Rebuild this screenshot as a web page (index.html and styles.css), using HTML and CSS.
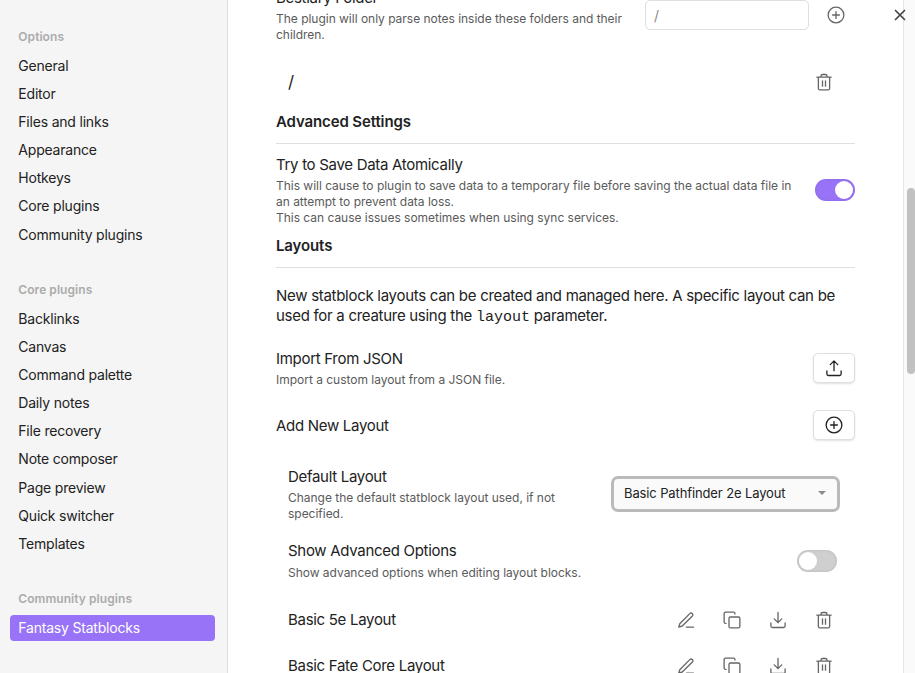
FILE: index.html
```html
<!DOCTYPE html>
<html lang="en">
<head>
<meta charset="utf-8">
<title>Settings</title>
<link rel="stylesheet" href="styles.css">
</head>
<body>
<svg class="defs" width="0" height="0">
  <defs>
    <symbol id="plus-circle" viewBox="0 0 24 24"><circle cx="12" cy="12" r="10.5"/><path d="M12 7.5v9M7.5 12h9"/></symbol>
    <symbol id="trash" viewBox="0 0 24 24"><path d="M2.500 5.500h19M4.500 5.500v15a2 2 0 0 0 2 2h11a2 2 0 0 0 2-2v-15M8 5.500V4a2 2 0 0 1 2-2h4a2 2 0 0 1 2 2v1.500M10 10.500v7M14 10.500v7"/></symbol>
    <symbol id="upload" viewBox="0 0 24 24"><path d="M2.500 16v4a2 2 0 0 0 2 2h15a2 2 0 0 0 2-2v-4M12 15.500V2.500M7 7.500l5-5 5 5"/></symbol>
    <symbol id="download" viewBox="0 0 24 24"><path d="M2.500 16v4a2 2 0 0 0 2 2h15a2 2 0 0 0 2-2v-4M12 2v13.500M7 10.500l5 5 5-5"/></symbol>
    <symbol id="copy" viewBox="0 0 24 24"><rect x="8" y="8" width="14.500" height="14.500" rx="2"/><path d="M4 16.500H3.500a2 2 0 0 1-2-2V3.500a2 2 0 0 1 2-2H14a2 2 0 0 1 2 2v.5"/></symbol>
    <symbol id="edit" viewBox="0 0 24 24"><path d="M12.500 21.500H22M17 3.500a2.300 2.300 0 0 1 3.500 3.200L7 20l-4.700 1.500L3.700 17z"/></symbol>
  </defs>
</svg>
<div class="modal">
  <nav class="sidebar">
    <section class="group">
      <h2>Options</h2>
      <a>General</a><a>Editor</a><a>Files and links</a><a>Appearance</a><a>Hotkeys</a><a>Core plugins</a><a>Community plugins</a>
    </section>
    <section class="group">
      <h2>Core plugins</h2>
      <a>Backlinks</a><a>Canvas</a><a>Command palette</a><a>Daily notes</a><a>File recovery</a><a>Note composer</a><a>Page preview</a><a>Quick switcher</a><a>Templates</a>
    </section>
    <section class="group">
      <h2>Community plugins</h2>
      <a class="active">Fantasy Statblocks</a>
    </section>
  </nav>
  <main class="content">
    <div class="row folder">
      <div class="info"><div class="name">Bestiary Folder</div><div class="desc">The plugin will only parse notes inside these folders and their<br>children.</div></div>
      <div class="folder-controls"><div class="input">/</div><svg class="icon"><use href="#plus-circle"/></svg></div>
    </div>
    <div class="row path"><div class="name">/</div><svg class="icon"><use href="#trash"/></svg></div>
    <h3>Advanced Settings</h3>
    <div class="row atomic">
      <div class="info"><div class="name">Try to Save Data Atomically</div><div class="desc">This will cause to plugin to save data to a temporary file before saving the actual data file in<br>an attempt to prevent data loss.<br>This can cause issues sometimes when using sync services.</div></div>
      <div class="toggle on"></div>
    </div>
    <h3>Layouts</h3>
    <p>New statblock layouts can be created and managed here. A specific layout can be<br>used for a creature using the <code>layout</code> parameter.</p>
    <div class="row import">
      <div class="info"><div class="name">Import From JSON</div><div class="desc">Import a custom layout from a JSON file.</div></div>
      <button><svg class="icon"><use href="#upload"/></svg></button>
    </div>
    <div class="row add"><div class="name">Add New Layout</div><button><svg class="icon"><use href="#plus-circle"/></svg></button></div>
    <div class="nested">
      <div class="row default">
        <div class="info"><div class="name">Default Layout</div><div class="desc">Change the default statblock layout used, if not<br>specified.</div></div>
        <div class="select"><span>Basic Pathfinder 2e Layout</span><i></i></div>
      </div>
      <div class="row advanced">
        <div class="info"><div class="name">Show Advanced Options</div><div class="desc">Show advanced options when editing layout blocks.</div></div>
        <div class="toggle"></div>
      </div>
      <div class="row layout"><div class="name">Basic 5e Layout</div><div class="actions"><svg class="icon"><use href="#edit"/></svg><svg class="icon"><use href="#copy"/></svg><svg class="icon"><use href="#download"/></svg><svg class="icon"><use href="#trash"/></svg></div></div>
      <div class="row layout"><div class="name">Basic Fate Core Layout</div><div class="actions"><svg class="icon"><use href="#edit"/></svg><svg class="icon"><use href="#copy"/></svg><svg class="icon"><use href="#download"/></svg><svg class="icon"><use href="#trash"/></svg></div></div>
    </div>
  </main>
  <div class="scrollbar"><div class="thumb"></div></div>
  <svg class="close" viewBox="0 0 12 12"><path d="M1.500 1.500l9 9M10.500 1.500l-9 9"/></svg>
</div>
</body>
</html>
```
FILE: styles.css
```css
* { box-sizing: border-box; }
body { margin: 0; background: #fff; color: #222; font-family: Inter, sans-serif; font-size: 15px; }
.defs { position: absolute; }
.modal { position: relative; display: flex; width: 915px; height: 673px; overflow: hidden; background: #fff; }
.sidebar { width: 228px; flex: none; padding: 21px 12px 0 10px; background: #f5f5f5; border-right: 1px solid #dfdfdf; }
.group { margin-bottom: 26.4px; }
h2 { margin: 0; padding-left: 8.3px; font-size: 12px; font-weight: 600; line-height: 32px; letter-spacing: 0.06px; color: #ababab; }
.group a { display: block; height: 26px; margin-bottom: 2.1px; padding-left: 8.3px; border-radius: 4px; font-size: 14px; line-height: 26px; letter-spacing: -0.2px; }
.group .active { background: #9873f7; color: #fff; }
.content { flex: 1; min-width: 0; padding: 0 48px; white-space: nowrap; }
.row { display: flex; justify-content: space-between; align-items: center; }
.name { line-height: 20px; letter-spacing: -0.3px; }
.desc { margin-top: 3px; font-size: 12px; line-height: 16px; letter-spacing: -0.02px; color: #5a5a5a; }
h3 { margin: 0; height: 32px; border-bottom: 1px solid #dfdfdf; font-size: 15px; font-weight: 600; line-height: 20px; letter-spacing: -0.12px; }
p { margin: 18px 0 21px; line-height: 20px; letter-spacing: -0.285px; }
code { font-family: "Liberation Mono", monospace; font-size: 15px; letter-spacing: 0; }
.icon { display: block; width: 18px; height: 18px; overflow: visible; fill: none; stroke: #666; stroke-width: 1.75; stroke-linecap: round; stroke-linejoin: round; }
.folder { margin-top: -12px; }
.folder-controls { display: flex; align-items: center; gap: 18px; padding-right: 10px; margin-bottom: 1px; }
.input { width: 164px; height: 30px; padding-left: 8px; border: 1px solid #dfdfdf; border-radius: 5px; font-size: 14px; line-height: 29px; color: #8a8a8a; }
.path { height: 28px; margin: 25px 22px 16px 12px; }
.path .name { font-size: 17px; }
.atomic { margin: 11px 0 10px; }
.toggle { width: 40px; height: 22px; padding: 2px; border-radius: 11px; background: #cfcfcf; box-shadow: inset 0 0 3px rgba(0,0,0,.12); }
.toggle::before { content: ""; display: block; width: 18px; height: 18px; border-radius: 50%; background: #fff; }
.toggle.on { margin-bottom: 1px; padding-left: 20px; background: #9873f7; }
button { display: grid; place-items: center; width: 42px; height: 30px; padding: 0; border: 1px solid #dfdfdf; border-radius: 5px; background: #fff; box-shadow: 0 1px 2px rgba(0,0,0,.12); }
button .icon { stroke: #222; }
.import button { margin-bottom: 2px; }
.add { margin-top: 22px; }
.add .name { padding-top: 1px; }
.nested { padding: 27px 15px 0 12px; }
.select { display: flex; align-items: center; justify-content: space-between; width: 229px; height: 36px; margin-bottom: 2px; padding: 0 11px 1px 10px; border: 3px solid #bababa; border-radius: 7px; background: #fafafa; font-size: 13px; letter-spacing: -0.12px; }
.select i { border: 4px solid transparent; border-top: 4px solid #8a8a8a; border-bottom: 0; }
.advanced { margin: 19px 3px 25px 0; }
.advanced .desc { margin-top: 4px; }
.layout { height: 28px; margin: 0 7px 18px 0; }
.actions { display: flex; gap: 28px; }
.scrollbar { width: 12px; flex: none; padding: 188px 0 0 3px; background: #fafafa; border-left: 1px solid #e7e7e7; }
.thumb { height: 186px; border-radius: 4px; background: #c1c1c1; }
.close { position: absolute; left: 893.5px; top: 9px; width: 12px; height: 12px; stroke: #444; stroke-width: 1.7; stroke-linecap: round; }
```
